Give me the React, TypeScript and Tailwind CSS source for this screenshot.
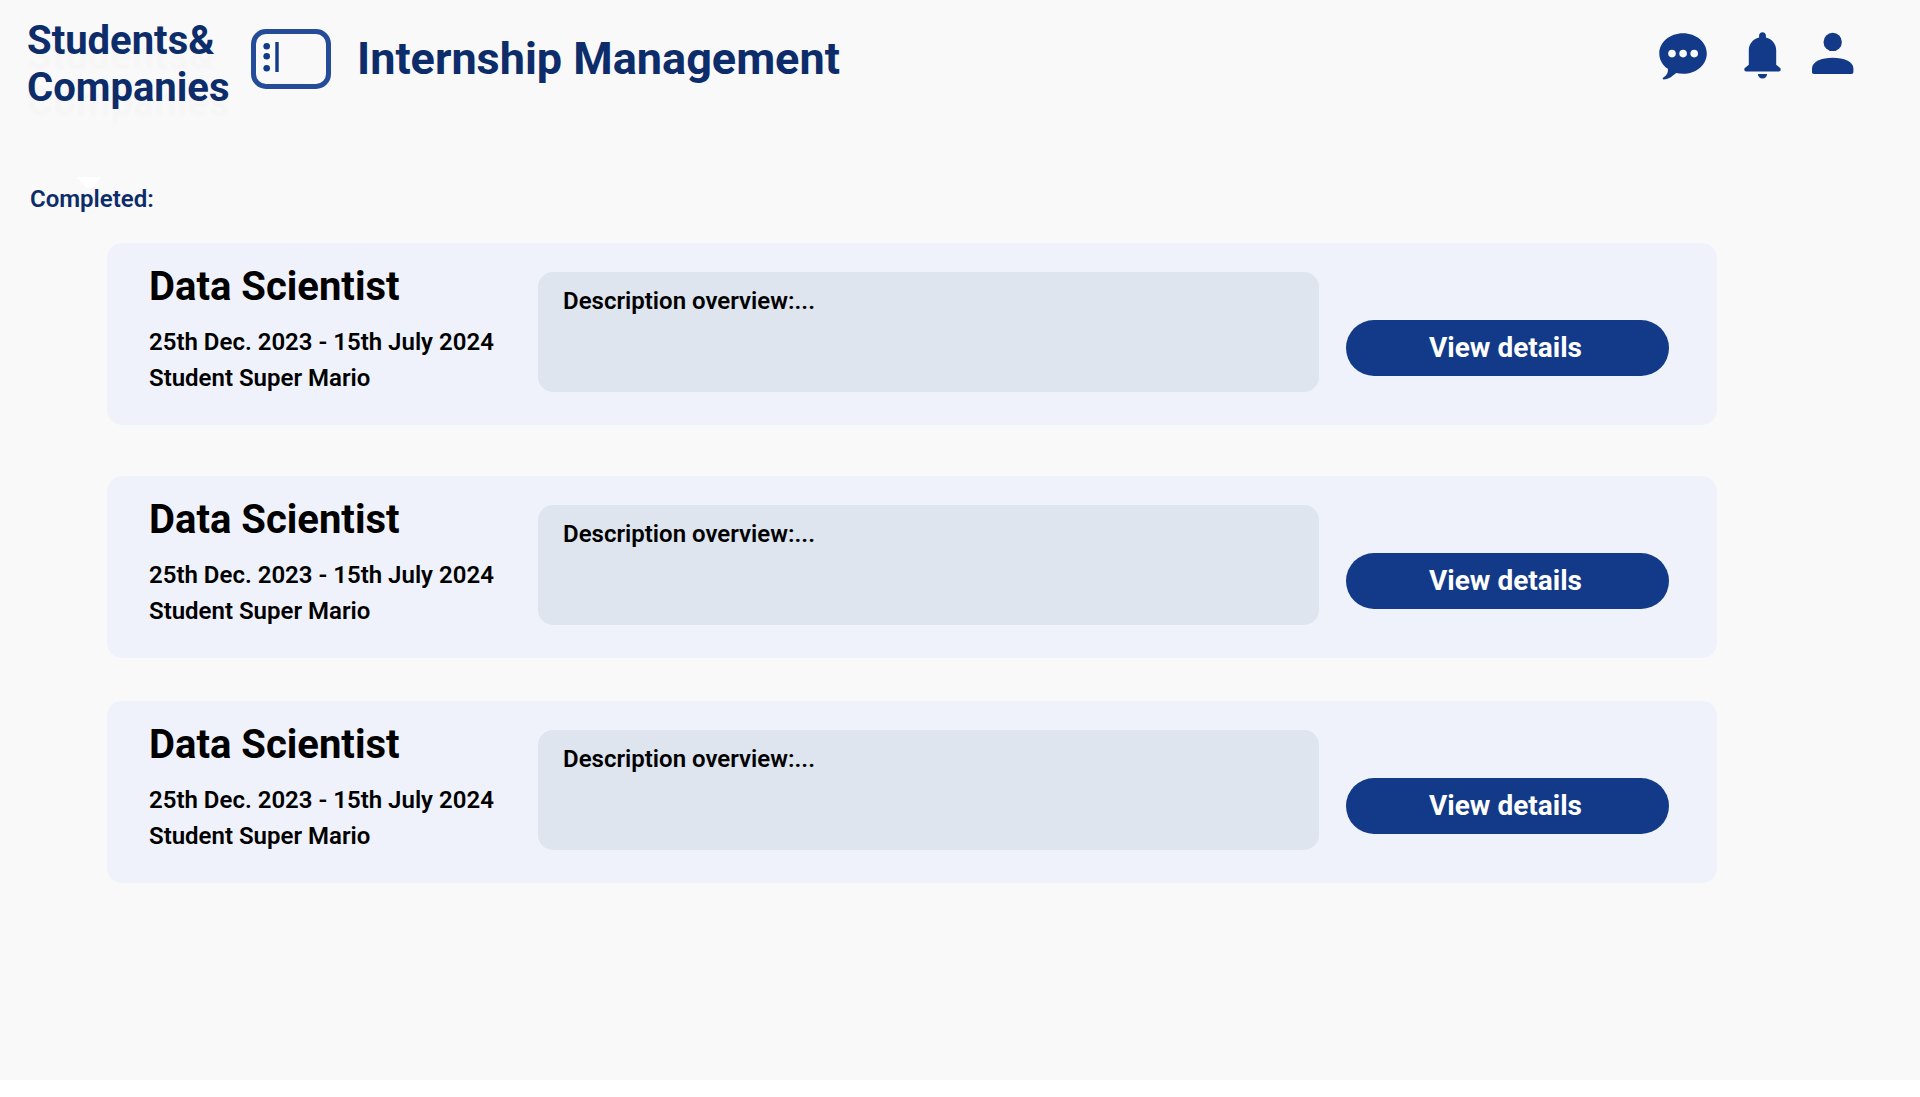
type Internship = { title: string; period: string; student: string; spacing: string };

const internships: Internship[] = [
  { title: 'Data Scientist', period: '25th Dec. 2023 - 15th July 2024', student: 'Student Super Mario', spacing: 'mt-[30px]' },
  { title: 'Data Scientist', period: '25th Dec. 2023 - 15th July 2024', student: 'Student Super Mario', spacing: 'mt-[51px]' },
  { title: 'Data Scientist', period: '25th Dec. 2023 - 15th July 2024', student: 'Student Super Mario', spacing: 'mt-[43px]' },
];

function PanelIcon() {
  return (
    <svg className="block h-[60px] w-20" viewBox="0 0 80 60" fill="#123a88">
      <rect x="2.5" y="2.5" width="75" height="55" rx="12.5" fill="none" stroke="#244c99" strokeWidth="5" />
      <circle cx="15.7" cy="17.2" r="3.3" />
      <circle cx="15.7" cy="27.2" r="3.3" />
      <circle cx="15.7" cy="39.2" r="3.3" />
      <rect x="24.3" y="13" width="3.4" height="30" />
    </svg>
  );
}

function ChatIcon() {
  return (
    <svg className="block h-[47px] w-12" viewBox="0 0 48 47" fill="#123a88">
      <path d="M24 .2C37 .2 47.8 9 47.8 20.4S37 40.8 24 40.8c-2.500 0-4.600-.2-6.800-.8-3.200 2.500-7 6.400-12.600 6.400-1.300 0-1.200-1.200-.2-1.800 3.800-2.400 4.800-5.400 4.500-8.800C3.300 32 .3 26.500 .3 20.400.3 9 11 .2 24 .2Z" />
      <g fill="#f9f9f9">
        <circle cx="13" cy="20.600" r="3.800" />
        <circle cx="24.100" cy="20.600" r="3.800" />
        <circle cx="35.200" cy="20.600" r="3.800" />
      </g>
    </svg>
  );
}

function BellIcon() {
  return (
    <svg className="block h-[47px] w-[37px]" viewBox="0 0 37 47" fill="#123a88">
      <path d="M15.100 5.600V3.600C15.100 1.600 16.500.3 18.500.3s3.400 1.300 3.400 3.300v2C28.200 7.200 32.200 12.200 32.200 18.500v14.300l3.700 3c1.500 1.200.9 3.700-1 3.700H2.100c-1.900 0-2.500-2.500-1-3.700l3.700-3V18.500C4.800 12.200 8.800 7.200 15.100 5.600Z" />
      <path d="M13.900 41.900h9.200c0 2.600-2 4.500-4.600 4.500s-4.600-1.900-4.600-4.500Z" />
    </svg>
  );
}

function UserIcon() {
  return (
    <svg className="block h-[42px] w-[42px]" viewBox="0 0 42 42" fill="#123a88">
      <circle cx="20.700" cy="9.900" r="9.200" />
      <path d="M0 36.500C0 29.500 9.500 25.700 20.700 25.700s20.700 3.800 20.700 10.800v3.600c0 1.200-.7 1.900-1.900 1.900H1.900C.7 42 0 41.300 0 40.100Z" />
    </svg>
  );
}

function InternshipCard({ item }: { item: Internship }) {
  return (
    <article className={`ml-[107px] flex h-[182px] w-[1610px] items-start rounded-[15px] bg-[#eff2fa] pl-[42px] text-black ${item.spacing}`}>
      <div className="w-[389px] pt-5 whitespace-nowrap">
        <h2 className="text-[40px] leading-[47px] font-bold">{item.title}</h2>
        <p className="mt-[14px] text-2xl leading-9 font-semibold">{item.period}</p>
        <p className="text-2xl leading-9 font-semibold">{item.student}</p>
      </div>
      <div className="mt-[29px] h-[120px] w-[781px] rounded-[15px] bg-[#dee5ee] pt-[15px] pl-[25px]">
        <p className="text-2xl leading-7 font-semibold">Description overview:...</p>
      </div>
      <button className="mt-[77px] ml-[27px] flex h-14 w-[323px] items-center justify-center rounded-full bg-[#123a88] pr-1 pb-[2px] text-[28px] leading-[33px] font-bold text-white">
        View details
      </button>
    </article>
  );
}

export default function App() {
  return (
    <div className="h-[1097px] w-full overflow-hidden bg-white font-['Roboto',sans-serif]">
      <main className="h-[1080px] bg-[#f9f9f9] text-[#0d2c6a]">
        <header className="flex h-[185px] items-start">
          <div className="w-[224px] pt-[17px] ml-[27px] text-[40px] leading-[47px] font-bold [text-shadow:0_15px_3px_rgba(0,0,0,0.015)]">
            Students&amp;
            <br />
            Companies
          </div>
          <div className="pt-[29px]">
            <PanelIcon />
          </div>
          <h1 className="ml-[26px] pt-8 text-[45px] leading-[53px] font-bold whitespace-nowrap">Internship Management</h1>
          <nav className="mr-[66px] ml-auto flex items-start pt-8">
            <button className="pt-px"><ChatIcon /></button>
            <button className="ml-[37px]"><BellIcon /></button>
            <button className="ml-[31px]"><UserIcon /></button>
          </nav>
        </header>
        <div className="relative pl-[30px]">
          <svg className="absolute -top-2 left-[77px] h-8 w-6" viewBox="0 0 24 32" fill="#ffffff">
            <path d="M0 0H24L15 11H9Z" />
            <path d="M9 13H15V32H9Z" fillOpacity="0.5" />
          </svg>
          <p className="relative text-2xl leading-7 font-semibold">Completed:</p>
        </div>
        {internships.map((item, index) => (
          <InternshipCard key={index} item={item} />
        ))}
      </main>
    </div>
  );
}
